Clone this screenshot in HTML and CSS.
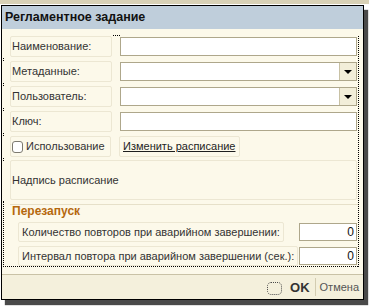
FILE: index.html
```html
<!DOCTYPE html>
<html lang="ru">
<head>
<meta charset="utf-8">
<link rel="stylesheet" href="styles.css">
</head>
<body>
<div class="topband"></div>
<div class="win">
  <div class="title">Регламентное задание</div>
  <div class="form">
    <div class="main">
      <div class="rows">
        <div class="row first">
          <div class="lbl">Наименование:</div>
          <div class="field"></div>
        </div>
        <div class="row">
          <div class="lbl">Метаданные:</div>
          <div class="field combo"><span class="btn"><span class="tri"></span></span></div>
        </div>
        <div class="row">
          <div class="lbl">Пользователь:</div>
          <div class="field combo"><span class="btn"><span class="tri"></span></span></div>
        </div>
        <div class="row">
          <div class="lbl">Ключ:</div>
          <div class="field"></div>
        </div>
        <div class="row chkrow">
          <div class="lbl chk"><span class="box"></span>Использование</div>
          <div class="lbl link"><span class="u">Изменить расписание</span></div>
        </div>
        <div class="caption">Надпись расписание</div>
      </div>
      <div class="group">
        <div class="gline"></div>
        <div class="ghead">Перезапуск</div>
        <div class="grow">
          <div class="lbl">Количество повторов при аварийном завершении:</div>
          <div class="field num">0</div>
        </div>
        <div class="grow">
          <div class="lbl">Интервал повтора при аварийном завершении (сек.):</div>
          <div class="field num">0</div>
        </div>
      </div>
    </div>
  </div>
  <div class="footer">
    <svg class="ico" width="15" height="13" viewBox="0 0 15 13"><rect x="0.5" y="0.5" width="14" height="12" rx="3.5" fill="none" stroke="#4a4a4a" stroke-dasharray="1 1"/></svg>
    <span class="ok">OK</span>
    <span class="sep"></span>
    <span class="cancel">Отмена</span>
  </div>
</div>
</body>
</html>
```
FILE: styles.css
```css
html, body {
  margin: 0;
  padding: 0;
  background: #ffffff;
}
body {
  font-family: "Liberation Sans", Arial, sans-serif;
  font-size: 11px;
  color: #2a2a2a;
  width: 369px;
  height: 308px;
  overflow: hidden;
}
.topband {
  height: 4px;
  background: #d8d1b6;
  margin-bottom: 1px;
}
.win {
  margin-left: 1px;
  width: 363px;
  height: 295px;
  box-sizing: border-box;
  border: 1px solid #000;
  background: #fcf9ea;
  box-shadow: 4px 5px 1px #4a4a4a;
  display: flex;
  flex-direction: column;
}
.title {
  height: 23px;
  line-height: 23px;
  background: #bfcedb;
  font-size: 12.5px;
  font-weight: bold;
  color: #111;
  padding-left: 3px;
}
.form {
  flex: 1;
  padding: 7px 0 0 1px;
}
.main {
  width: 356px;
  box-sizing: border-box;
  border-right: 1px dotted #000;
}
.rows {
  padding-left: 7px;
  display: flex;
  flex-direction: column;
  gap: 4px;
}
.row {
  position: relative;
  display: grid;
  grid-template-columns: 102px 237px;
  column-gap: 8px;
  height: 21px;
  align-items: center;
}
.row::after {
  content: "";
  position: absolute;
  left: -7px;
  bottom: -4px;
  width: 1px;
  height: 3px;
  border-left: 1px dotted #000;
}
.row.first::before {
  content: "";
  position: absolute;
  left: 103px;
  top: -1px;
  width: 7px;
  border-top: 1px dotted #000;
}
.lbl {
  box-sizing: border-box;
  height: 21px;
  line-height: 19px;
  border: 1px solid #ece7d3;
  border-radius: 2px;
  padding-left: 1px;
  white-space: nowrap;
  color: #333;
}
.field {
  position: relative;
  box-sizing: border-box;
  height: 19px;
  background: #fff;
  border: 1px solid #aea78b;
}
.combo .btn {
  position: absolute;
  right: 0;
  top: 0;
  bottom: 0;
  width: 16px;
  background: #f2eed9;
  border-left: 1px solid #c8c1a4;
  display: flex;
  align-items: center;
  justify-content: center;
}
.tri {
  width: 0;
  height: 0;
  border-left: 4px solid transparent;
  border-right: 4px solid transparent;
  border-top: 4px solid #000;
  margin-top: 1px;
}
.chkrow {
  grid-template-columns: 101px auto;
  justify-content: start;
}
.chk {
  display: flex;
  align-items: center;
  gap: 3px;
  padding-left: 1px;
}
.box {
  width: 11px;
  height: 12px;
  box-sizing: border-box;
  border: 1px solid #7d7a70;
  border-radius: 3px;
  background: #fff;
}
.link {
  padding: 0 4px 0 3px;
}
.u {
  text-decoration: underline;
  color: #1e1e1e;
}
.caption {
  box-sizing: border-box;
  height: 40px;
  width: 347px;
  margin-top: -1px;
  border: 1px solid #ece7d3;
  border-radius: 2px;
  padding-left: 1px;
  line-height: 38px;
  color: #333;
}
.group {
  margin-top: 1px;
  border-left: 1px dotted #000;
  border-bottom: 1px dotted #000;
  padding-left: 6px;
  display: flex;
  flex-direction: column;
}
.gline {
  margin-top: 3px;
  height: 1px;
  background: #e6e0c9;
}
.ghead {
  line-height: 13px;
  padding-left: 2px;
  font-size: 12px;
  font-weight: bold;
  color: #b5680e;
  margin-bottom: 4px;
}
.grow {
  display: flex;
  justify-content: space-between;
  align-items: center;
  height: 20px;
  margin: 0 1px 4px 8px;
}
.grow:last-child {
  margin-bottom: 0;
}
.grow .lbl {
  height: 20px;
  line-height: 18px;
  padding: 0 3px 0 3px;
}
.num {
  width: 58px;
  height: 18px;
  line-height: 16px;
  text-align: right;
  padding-right: 2px;
  color: #111;
  font-size: 12px;
}
.footer {
  height: 24px;
  border-top: 1px solid #c9c2a6;
  background: #f4f0dc;
  display: flex;
  align-items: center;
  justify-content: flex-end;
  padding-right: 4px;
}
.ico {
  margin-right: 8px;
  margin-top: 2px;
}
.ok {
  font-weight: bold;
  font-size: 13px;
  color: #333;
}
.sep {
  width: 1px;
  height: 18px;
  background: #d3ccb1;
  margin: 0 4px 0 5px;
}
.cancel {
  color: #555;
  font-size: 11px;
}
```
